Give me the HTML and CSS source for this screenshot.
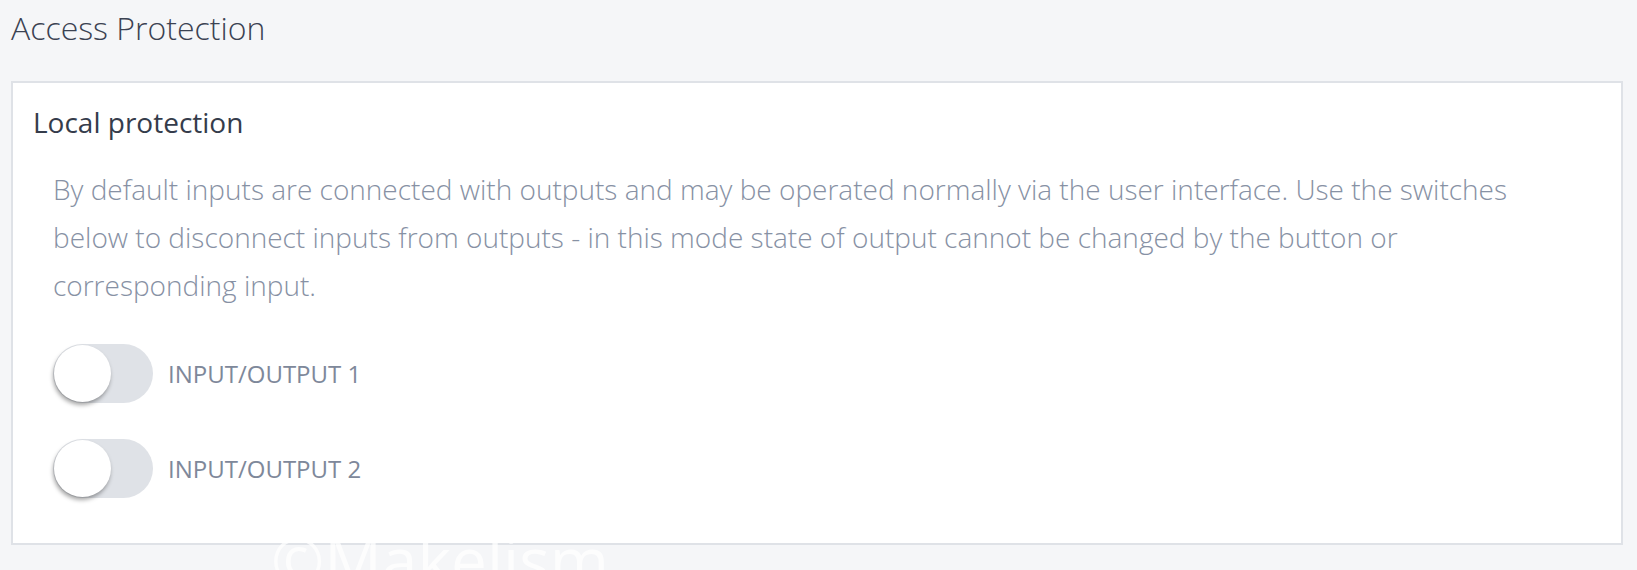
FILE: index.html
```html
<!DOCTYPE html>
<html>
<head>
<meta charset="utf-8">
<link rel="stylesheet" href="styles.css">
</head>
<body>
<h1 class="page-title">Access Protection</h1>
<section class="card">
  <h2 class="card-title">Local protection</h2>
  <p class="card-text">By default inputs are connected with outputs and may be operated normally via the user interface. Use the switches below to disconnect inputs from outputs - in this mode state of output cannot be changed by the button or corresponding input.</p>
  <div class="switch-list">
    <label class="switch-row">
      <span class="switch"><span class="knob"></span></span>
      <span class="switch-label">INPUT/OUTPUT 1</span>
    </label>
    <label class="switch-row">
      <span class="switch"><span class="knob"></span></span>
      <span class="switch-label">INPUT/OUTPUT 2</span>
    </label>
  </div>
</section>
<div class="watermark">©Makelism</div>
</body>
</html>
```
FILE: styles.css
```css
html {
  overflow: hidden;
}
body {
  margin: 0;
  padding: 0 14px 0 11px;
  background: #f5f6f8;
  font-family: "Open Sans", "Noto Sans", sans-serif;
  position: relative;
  height: 570px;
  overflow: hidden;
}
.page-title {
  margin: 6px 0 0 0;
  font-size: 32px;
  line-height: 44px;
  font-weight: 300;
  color: #3b4252;
}
.card {
  margin-top: 31px;
  background: #fff;
  border: 2px solid #dfe2e7;
  padding: 20px 20px 45px 20px;
}
.card-title {
  margin: 0;
  font-size: 28px;
  line-height: 38px;
  font-weight: 400;
  color: #353c4b;
}
.card-text {
  margin: 24px 0 0 20px;
  font-size: 28px;
  line-height: 48px;
  font-weight: 300;
  color: #8791a4;
  max-width: 1500px;
}
.switch-list {
  margin: 35px 0 0 20px;
  display: flex;
  flex-direction: column;
  gap: 36px;
}
.switch-row {
  display: flex;
  align-items: center;
  gap: 15px;
}
.switch {
  width: 100px;
  height: 59px;
  border-radius: 30px;
  background: #dfe2e7;
  display: flex;
  align-items: center;
  padding-left: 1px;
  box-sizing: border-box;
}
.knob {
  width: 57px;
  height: 57px;
  border-radius: 50%;
  background: #fff;
  box-shadow: -1px 3px 4px rgba(0, 0, 0, 0.35);
}
.switch-label {
  font-size: 24px;
  font-weight: 400;
  color: #7e889a;
}
.watermark {
  position: absolute;
  left: 271px;
  top: 516px;
  font-size: 64px;
  line-height: 88px;
  color: rgba(255, 255, 255, 0.75);
  white-space: nowrap;
}
```
